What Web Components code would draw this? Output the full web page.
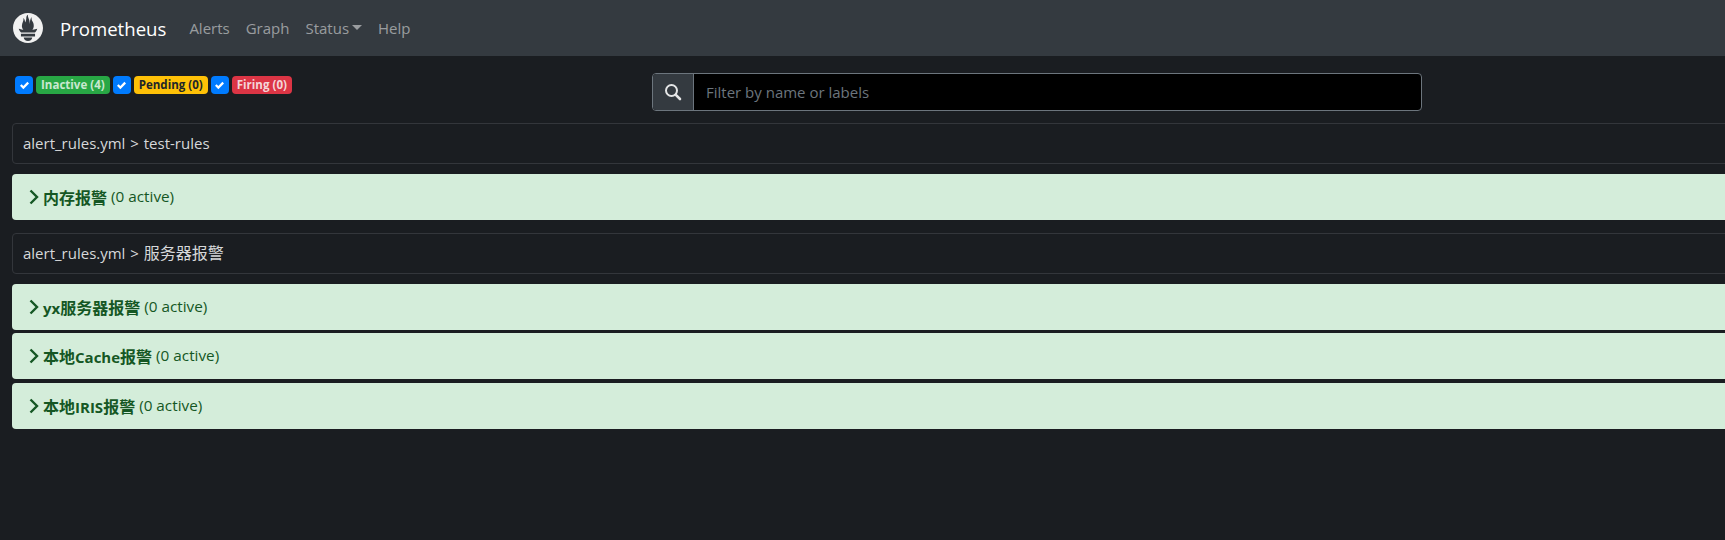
<!DOCTYPE html>
<html>
<head>
<meta charset="utf-8">
<title>Prometheus</title>
<style>
    html, body { margin: 0; height: 100%; overflow: hidden; background: #1a1d21; }
    body { font-family: "Open Sans", "Noto Sans CJK SC", sans-serif; font-size: 15px; color: #d6d8da; }
    main { display: block; width: 1760px; padding: 0 12px; box-sizing: border-box; }
    .zh { font-size: 16px; }
</style>
</head>
<body>
<prom-navbar></prom-navbar>
<main>
    <prom-toolbar>
        <state-toggle slot="states" color="#28a745" text="#c9e8d0">Inactive (4)</state-toggle>
        <state-toggle slot="states" color="#ffc107" text="#212529">Pending (0)</state-toggle>
        <state-toggle slot="states" color="#dc3545" text="#f4d5d8">Firing (0)</state-toggle>
    </prom-toolbar>
    <rule-group-header>alert_rules.yml &gt; test-rules</rule-group-header>
    <alert-rule name="内存报警"></alert-rule>
    <rule-group-header class="next">alert_rules.yml &gt; <span class="zh">服务器报警</span></rule-group-header>
    <alert-rule name="yx服务器报警"></alert-rule>
    <alert-rule name="本地Cache报警"></alert-rule>
    <alert-rule name="本地IRIS报警"></alert-rule>
</main>
<script>
    class PromNavbar extends HTMLElement {
        constructor() {
            super();
            this.attachShadow({ mode: 'open' });
            this.shadowRoot.innerHTML = `
                <style>
                    :host { display: flex; align-items: center; height: 56px; width: 1760px; padding-left: 13px; box-sizing: border-box; background: #343a40; }
                    svg { width: 30px; height: 30px; fill: #f1f1f1; display: block; }
                    .brand { color: #fff; font-size: 18.6px; margin: 0 15px 0 17px; }
                    a { color: rgba(255,255,255,.5); padding: 0 8px; display: flex; align-items: center; }
                    .caret { width: 0; height: 0; margin-left: 3px; border-top: 5px solid; border-left: 5px solid transparent; border-right: 5px solid transparent; margin-bottom: 2px; }
                </style>
                <svg viewBox="0 0 24 24"><path d="M12 0C5.373 0 0 5.372 0 12c0 6.627 5.373 12 12 12s12-5.373 12-12c0-6.628-5.373-12-12-12zm0 22.46c-1.885 0-3.414-1.26-3.414-2.814h6.828c0 1.553-1.528 2.813-3.414 2.813zm5.64-3.745H6.36v-2.046h11.28v2.046zm-.04-3.098H6.391c-.037-.043-.075-.086-.111-.13-1.155-1.401-1.427-2.133-1.69-2.879-.005-.025 1.4.287 2.395.511 0 0 .513.119 1.262.255-.72-.843-1.147-1.915-1.147-3.01 0-2.406 1.845-4.508 1.18-6.207.648.053 1.34 1.367 1.387 3.422.689-.951.977-2.69.977-3.755 0-1.103.727-2.385 1.454-2.429-.648 1.069.168 1.984.894 4.256.272.854.237 2.29.447 3.201.07-1.892.395-4.652 1.595-5.605-.529 1.2.079 2.702.494 3.424.671 1.164 1.078 2.047 1.078 3.716 0 1.12-.413 2.173-1.11 2.996.792-.149 1.34-.283 1.34-.283l2.573-.502s-.374 1.538-1.81 3.019z"/></svg>
                <span class="brand">Prometheus</span>
                <a>Alerts</a><a>Graph</a><a>Status<span class="caret"></span></a><a>Help</a>
            `;
        }
    }

    class StateToggle extends HTMLElement {
        constructor() {
            super();
            this.attachShadow({ mode: 'open' });
        }

        connectedCallback() {
            const color = this.getAttribute('color');
            const text = this.getAttribute('text');
            this.shadowRoot.innerHTML = `
                <style>
                    :host { display: flex; gap: 3px; }
                    .box { width: 18px; height: 18px; border-radius: 4px; background: #007bff; display: flex; align-items: center; justify-content: center; }
                    .box svg { width: 9px; height: 9px; fill: #fff; }
                    .badge { height: 18px; line-height: 18px; padding: 0 5px; border-radius: 4px; font-size: 11.55px; font-weight: 700; background: ${color}; color: ${text}; }
                </style>
                <span class="box"><svg viewBox="0 0 8 8"><path d="M6.564.75l-3.59 3.612-1.538-1.55L0 4.26 2.974 7.25 8 2.193z"/></svg></span>
                <span class="badge"><slot></slot></span>
            `;
        }
    }

    class PromToolbar extends HTMLElement {
        constructor() {
            super();
            this.attachShadow({ mode: 'open' });
            this.shadowRoot.innerHTML = `
                <style>
                    :host { display: flex; align-items: flex-start; padding: 17px 0 12px 3px; }
                    .states { display: flex; gap: 3px; width: 637px; padding-top: 3px; }
                    .search { display: flex; width: 770px; height: 38px; box-sizing: border-box; border: 1px solid #6c757d; border-radius: 4px; overflow: hidden; background: #000; }
                    .icon { width: 40px; background: #343a40; border-right: 1px solid #6c757d; display: flex; align-items: center; justify-content: center; }
                    .icon svg { width: 18px; height: 18px; fill: none; stroke: #e4e5e6; stroke-width: 2; stroke-linecap: round; }
                    .hint { padding-left: 12px; line-height: 36px; color: #6c757d; }
                </style>
                <div class="states"><slot name="states"></slot></div>
                <div class="search">
                    <span class="icon"><svg viewBox="0 0 18 18"><circle cx="7.5" cy="7.5" r="5.5"/><path d="M11.8 11.8 L16 16" stroke-width="2.6"/></svg></span>
                    <span class="hint">Filter by name or labels</span>
                </div>
            `;
        }
    }

    class RuleGroupHeader extends HTMLElement {
        constructor() {
            super();
            this.attachShadow({ mode: 'open' });
            this.shadowRoot.innerHTML = `
                <style>
                    :host { display: block; height: 41px; line-height: 39px; box-sizing: border-box; padding-left: 10px; border: 1px solid #33363b; border-radius: 4px; margin-bottom: 10px; word-spacing: 1px; }
                    :host(.next) { margin-top: 13px; }
                </style>
                <slot></slot>
            `;
        }
    }

    class AlertRule extends HTMLElement {
        constructor() {
            super();
            this.attachShadow({ mode: 'open' });
        }

        connectedCallback() {
            // CJK runs are set a size up, the latin font runs wider than the original
            const name = this.getAttribute('name').replace(/[\u4e00-\u9fff]+/g, m => `<span class="zh">${m}</span>`);
            this.shadowRoot.innerHTML = `
                <style>
                    :host { display: flex; align-items: center; height: 46px; margin-bottom: 3.33px; padding-left: 17px; border-radius: 4px; background: #d4edda; color: #155724; }
                    svg { width: 11px; height: 16px; margin-right: 3px; fill: none; stroke: #155724; stroke-width: 2.4; }
                    b { margin-right: 4px; }
                    .zh { font-size: 16px; }
                    .count { font-size: 15.3px; padding-bottom: 2px; }
                </style>
                <svg viewBox="0 0 11 16"><path d="M1.5 1.5 L8 8 L1.5 14.5"/></svg>
                <b>${name}</b>
                <span class="count">(0 active)</span>
            `;
        }
    }

    customElements.define('prom-navbar', PromNavbar);
    customElements.define('state-toggle', StateToggle);
    customElements.define('prom-toolbar', PromToolbar);
    customElements.define('rule-group-header', RuleGroupHeader);
    customElements.define('alert-rule', AlertRule);
</script>
</body>
</html>
